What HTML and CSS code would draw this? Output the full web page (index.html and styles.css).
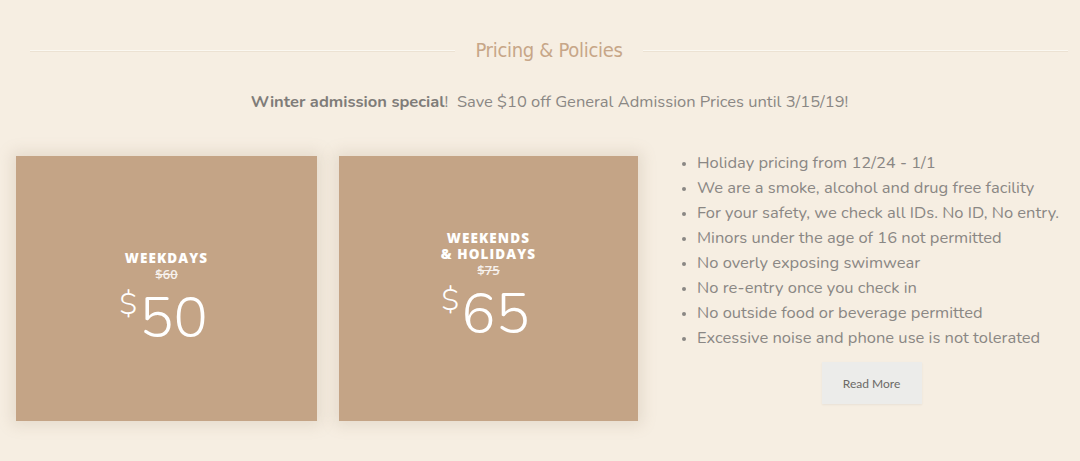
FILE: index.html
```html
<!DOCTYPE html>
<html>
<head>
<meta charset="utf-8">
<link rel="stylesheet" href="styles.css">
</head>
<body>
<section class="pricing">
  <div class="title-row">
    <span class="rule"></span>
    <h2 class="title">Pricing &amp; Policies</h2>
    <span class="rule"></span>
  </div>
  <p class="special"><strong>Winter admission special</strong>!&nbsp; Save $10 off General Admission Prices until 3/15/19!</p>
  <div class="content">
    <div class="card card-a">
      <div class="label">WEEKDAYS</div>
      <div class="old">$60</div>
      <div class="price"><span class="cur">$</span>50</div>
    </div>
    <div class="card card-b">
      <div class="label">WEEKENDS<br>&amp; HOLIDAYS</div>
      <div class="old">$75</div>
      <div class="price"><span class="cur">$</span>65</div>
    </div>
    <div class="policies">
      <ul class="list">
        <li>Holiday pricing from 12/24 - 1/1</li>
        <li>We are a smoke, alcohol and drug free facility</li>
        <li>For your safety, we check all IDs. No ID, No entry.</li>
        <li>Minors under the age of 16 not permitted</li>
        <li>No overly exposing swimwear</li>
        <li>No re-entry once you check in</li>
        <li>No outside food or beverage permitted</li>
        <li>Excessive noise and phone use is not tolerated</li>
      </ul>
      <button class="more">Read More</button>
    </div>
  </div>
</section>
</body>
</html>
```
FILE: styles.css
```css
html, body {
  margin: 0;
  padding: 0;
  background: #f6eee2;
}
body {
  width: 1080px;
  height: 461px;
  overflow: hidden;
  font-family: "Nunito", Lato, "Open Sans", sans-serif;
  color: #8a8784;
}
.pricing {
  padding: 36px 12px 0 16px;
}
.title-row {
  display: flex;
  align-items: center;
  gap: 20px;
  padding: 0 0 0 14px;
  height: 28px;
}
.rule {
  flex: 1;
  height: 1px;
  background: #fbf8f1;
  box-shadow: 0 1px 0 #ece2d3;
}
.title {
  margin: 0;
  font-family: "DejaVu Sans Condensed", "Liberation Sans Narrow", sans-serif;
  font-weight: normal;
  font-size: 20px;
  color: #c7a688;
  letter-spacing: -0.3px;
}
.special {
  margin: 27px 0 0;
  padding-left: 15px;
  text-align: center;
  font-size: 16.5px;
  line-height: 22px;
}
.special strong {
  font-weight: bold;
  color: #7f7c79;
}
.content {
  display: flex;
  margin-top: 43px;
}
.card {
  width: 301px;
  height: 265px;
  background: #c4a486;
  box-shadow: 0 0 14px 4px rgba(150, 130, 100, 0.18);
  display: flex;
  flex-direction: column;
  align-items: center;
  justify-content: center;
  color: #fff;
  margin-right: 22px;
  box-sizing: border-box;
}
.card-a {
  padding-top: 18px;
}
.card-b {
  width: 299px;
  margin-right: 40px;
  padding-bottom: 5px;
}
.label {
  font-family: "Open Sans", sans-serif;
  font-weight: 800;
  font-size: 13.5px;
  line-height: 16px;
  letter-spacing: 1.1px;
  text-align: center;
}
.old {
  font-family: "Open Sans", sans-serif;
  font-weight: 600;
  font-size: 13px;
  line-height: 16px;
  text-decoration: line-through;
  opacity: 0.85;
}
.price {
  font-family: "Nunito", Lato, sans-serif;
  font-weight: 300;
  font-size: 57px;
  line-height: 56px;
  display: flex;
  align-items: flex-start;
  margin-top: 8px;
  margin-left: -6px;
}
.cur {
  font-size: 30px;
  line-height: 30px;
  margin-right: 2px;
}
.policies {
  display: flex;
  flex-direction: column;
  align-items: center;
  margin-top: -6px;
}
.list {
  margin: 0;
  padding: 0 0 0 19px;
  list-style: disc;
  font-size: 16.5px;
  line-height: 25px;
  color: #8a8784;
}
.list li::marker {
  font-size: 13px;
}
.more {
  margin-top: 12px;
  margin-left: 6px;
  width: 100px;
  height: 42px;
  border: none;
  background: #ececea;
  color: #6b6966;
  font-family: Lato, sans-serif;
  font-size: 12px;
  box-shadow: 0 1px 2px rgba(0,0,0,0.06);
}
```
